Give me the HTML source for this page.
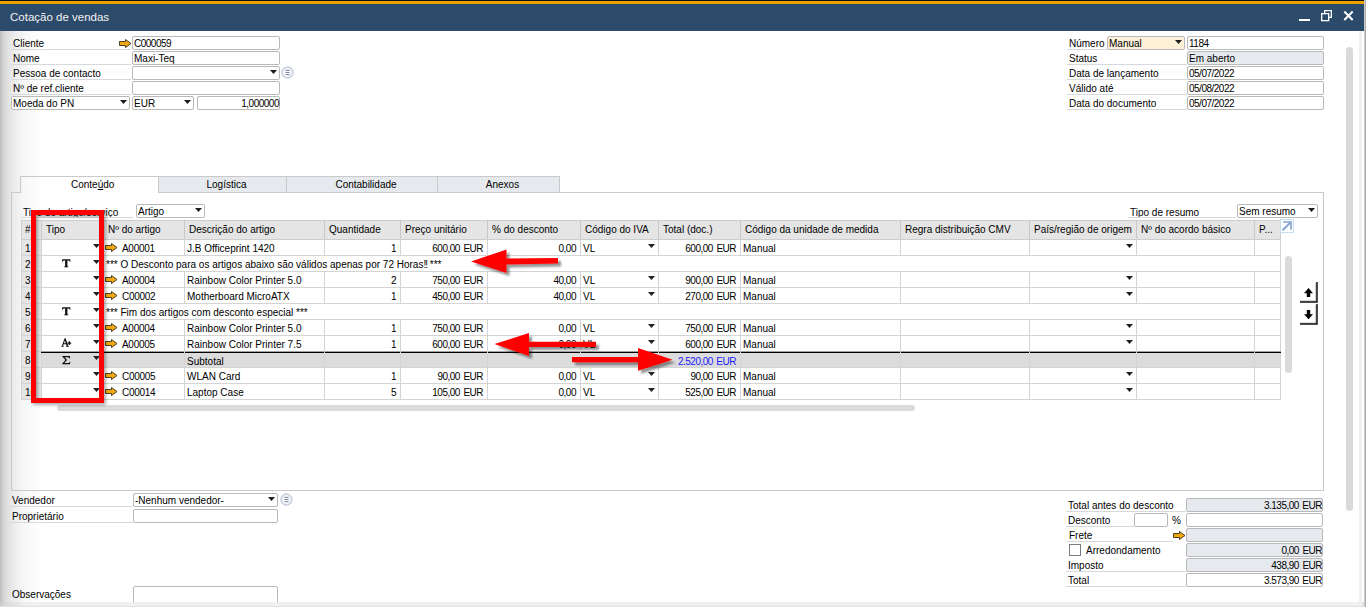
<!DOCTYPE html><html><head><meta charset="utf-8"><style>
html,body{margin:0;padding:0;width:1366px;height:607px;overflow:hidden;background:#fff;font-family:"Liberation Sans", sans-serif;}
.t{position:absolute;font-size:10px;line-height:12px;white-space:nowrap;color:#000;}

</style></head><body>
<div style="position:absolute;left:0px;top:0px;width:1366px;height:607px;background:#fff;"></div>
<div style="position:absolute;left:0px;top:31px;width:44px;height:576px;background:linear-gradient(to right,#c2c2c2 0px,#c2c2c2 2px,#cdcdcd 2px,#d4d4d4 4px,#e2e2e2 8px,#efefef 16px,#f8f8f8 26px,#fff 44px);"></div>
<div style="position:absolute;left:0px;top:602px;width:1366px;height:5px;background:#e2e2e2;"></div>
<div style="position:absolute;left:1359px;top:31px;width:3px;height:571px;background:#f0f0f0;"></div>
<div style="position:absolute;left:0px;top:0px;width:1366px;height:1px;background:#111;"></div>
<div style="position:absolute;left:0px;top:1px;width:1366px;height:3px;background:#e8a200;"></div>
<div style="position:absolute;left:0px;top:4px;width:1364px;height:27px;background:#2c4a6a;"></div>
<div class="t" style="left:10px;top:10px;font-size:11.5px;line-height:14px;color:#f2f2f2;">Cotação de vendas</div>
<div style="position:absolute;left:1299px;top:19px;width:11px;height:2px;background:#fff;"></div>
<svg width="14" height="14" style="position:absolute;left:1320px;top:9px"><rect x="1.65" y="4.65" width="7" height="7" fill="none" stroke="#fff" stroke-width="1.3"/><path d="M4.65 4.2V1.65H11.35V8.35H9" fill="none" stroke="#fff" stroke-width="1.3"/></svg>
<svg width="12" height="12" style="position:absolute;left:1343px;top:10px"><path d="M1.3 1.5L9.7 10M9.7 1.5L1.3 10" stroke="#fff" stroke-width="2"/></svg>
<div style="position:absolute;left:1346px;top:47px;width:7px;height:464px;background:#dadada;border-radius:3.5px;"></div>
<div class="t" style="left:13px;top:38px;">Cliente</div>
<div style="position:absolute;left:11px;top:49px;width:120px;height:1px;background:#d6d9de;"></div>
<div class="t" style="left:13px;top:53px;">Nome</div>
<div style="position:absolute;left:11px;top:64px;width:120px;height:1px;background:#d6d9de;"></div>
<div class="t" style="left:13px;top:68px;">Pessoa de contacto</div>
<div style="position:absolute;left:11px;top:79px;width:120px;height:1px;background:#d6d9de;"></div>
<div class="t" style="left:13px;top:83px;">Nº de ref.cliente</div>
<div style="position:absolute;left:11px;top:94px;width:120px;height:1px;background:#d6d9de;"></div>
<svg width="13" height="9" viewBox="0 0 13 9" style="position:absolute;left:119px;top:39px"><path d="M0.5 2.5 H6.5 V0.5 L12 4.5 L6.5 8.5 V6.5 H0.5 Z" fill="#f0a80e" stroke="#3a3020" stroke-width="0.9" stroke-linejoin="miter"/></svg>
<div style="position:absolute;left:132px;top:36px;width:148px;height:14px;box-sizing:border-box;border:1px solid #b9b9b9;border-radius:2px;background:#fff;"></div>
<div class="t" style="left:134px;top:38px;letter-spacing:-0.5px;word-spacing:1.2px;">C000059</div>
<div style="position:absolute;left:132px;top:51px;width:148px;height:14px;box-sizing:border-box;border:1px solid #b9b9b9;border-radius:2px;background:#fff;"></div>
<div class="t" style="left:134px;top:53px;">Maxi-Teq</div>
<div style="position:absolute;left:132px;top:66px;width:148px;height:14px;box-sizing:border-box;border:1px solid #b9b9b9;border-radius:2px;background:#fff;"></div>
<svg width="7" height="4" style="position:absolute;left:270px;top:70px"><path d="M0 0 H7 L3.5 4 Z" fill="#1e1e1e"/></svg>
<svg width="14" height="14" style="position:absolute;left:281px;top:66px"><defs><radialGradient id="rg28166"><stop offset="0.45" stop-color="#fbfcfe"/><stop offset="1" stop-color="#dfe5f3"/></radialGradient></defs><circle cx="6.5" cy="6.5" r="5.6" fill="url(#rg28166)" stroke="#aab4cc" stroke-width="0.9"/><path d="M4.6 4.4H8.6M4.6 6.5H8.6M4.6 8.6H8.6" stroke="#6f7890" stroke-width="0.9"/></svg>
<div style="position:absolute;left:132px;top:81px;width:148px;height:14px;box-sizing:border-box;border:1px solid #b9b9b9;border-radius:2px;background:#fff;"></div>
<div style="position:absolute;left:11px;top:96px;width:119px;height:14px;box-sizing:border-box;border:1px solid #b9b9b9;border-radius:2px;background:#fff;"></div>
<div class="t" style="left:13px;top:98px;">Moeda do PN</div>
<svg width="7" height="4" style="position:absolute;left:120px;top:100px"><path d="M0 0 H7 L3.5 4 Z" fill="#1e1e1e"/></svg>
<div style="position:absolute;left:132px;top:96px;width:62px;height:14px;box-sizing:border-box;border:1px solid #b9b9b9;border-radius:2px;background:#fff;"></div>
<div class="t" style="left:134px;top:98px;">EUR</div>
<svg width="7" height="4" style="position:absolute;left:184px;top:100px"><path d="M0 0 H7 L3.5 4 Z" fill="#1e1e1e"/></svg>
<div style="position:absolute;left:197px;top:96px;width:83px;height:14px;box-sizing:border-box;border:1px solid #b9b9b9;border-radius:2px;background:#fff;"></div>
<div class="t" style="right:1087px;top:98px;letter-spacing:-0.5px;word-spacing:1.2px;">1,000000</div>
<div class="t" style="left:1069px;top:38px;">Número</div>
<div style="position:absolute;left:1067px;top:49px;width:40px;height:1px;background:#d6d9de;"></div>
<div style="position:absolute;left:1107px;top:36px;width:78px;height:14px;box-sizing:border-box;border:1px solid #b9b9b9;border-radius:2px;background:#fdf1d8;"></div>
<div class="t" style="left:1109px;top:38px;">Manual</div>
<svg width="7" height="4" style="position:absolute;left:1175px;top:40px"><path d="M0 0 H7 L3.5 4 Z" fill="#1e1e1e"/></svg>
<div style="position:absolute;left:1187px;top:36px;width:137px;height:14px;box-sizing:border-box;border:1px solid #b9b9b9;border-radius:2px;background:#fff;"></div>
<div class="t" style="left:1189px;top:38px;letter-spacing:-0.5px;word-spacing:1.2px;">1184</div>
<div class="t" style="left:1069px;top:53px;">Status</div>
<div style="position:absolute;left:1067px;top:64px;width:120px;height:1px;background:#d6d9de;"></div>
<div style="position:absolute;left:1187px;top:51px;width:137px;height:14px;box-sizing:border-box;border:1px solid #b9b9b9;border-radius:2px;background:#e6eaee;"></div>
<div class="t" style="left:1189px;top:53px;">Em aberto</div>
<div class="t" style="left:1069px;top:68px;">Data de lançamento</div>
<div style="position:absolute;left:1067px;top:79px;width:120px;height:1px;background:#d6d9de;"></div>
<div style="position:absolute;left:1187px;top:66px;width:137px;height:14px;box-sizing:border-box;border:1px solid #b9b9b9;border-radius:2px;background:#fff;"></div>
<div class="t" style="left:1189px;top:68px;letter-spacing:-0.5px;word-spacing:1.2px;">05/07/2022</div>
<div class="t" style="left:1069px;top:83px;">Válido até</div>
<div style="position:absolute;left:1067px;top:94px;width:120px;height:1px;background:#d6d9de;"></div>
<div style="position:absolute;left:1187px;top:81px;width:137px;height:14px;box-sizing:border-box;border:1px solid #b9b9b9;border-radius:2px;background:#fff;"></div>
<div class="t" style="left:1189px;top:83px;letter-spacing:-0.5px;word-spacing:1.2px;">05/08/2022</div>
<div class="t" style="left:1069px;top:98px;">Data do documento</div>
<div style="position:absolute;left:1067px;top:109px;width:120px;height:1px;background:#d6d9de;"></div>
<div style="position:absolute;left:1187px;top:96px;width:137px;height:14px;box-sizing:border-box;border:1px solid #b9b9b9;border-radius:2px;background:#fff;"></div>
<div class="t" style="left:1189px;top:98px;letter-spacing:-0.5px;word-spacing:1.2px;">05/07/2022</div>
<div style="position:absolute;left:11px;top:192px;width:1313px;height:299px;box-sizing:border-box;border:1px solid #c9c9c9;border-top:none;"></div>
<div style="position:absolute;left:11px;top:192px;width:10px;height:1px;background:#c9c9c9;"></div>
<div style="position:absolute;left:158px;top:192px;width:1166px;height:1px;background:#c9c9c9;"></div>
<div style="position:absolute;left:20px;top:176px;width:139px;height:17px;box-sizing:border-box;border:1px solid #c9c9c9;border-bottom:none;"></div>
<div class="t" style="left:71px;top:179px;">Conte<u>ú</u>do</div>
<div style="position:absolute;left:158px;top:176px;width:129px;height:17px;box-sizing:border-box;border:1px solid #c9c9c9;background:#e6eaee;"></div>
<div class="t" style="left:162px;width:129px;top:179px;text-align:center">Logística</div>
<div style="position:absolute;left:286px;top:176px;width:152px;height:17px;box-sizing:border-box;border:1px solid #c9c9c9;background:#e6eaee;"></div>
<div class="t" style="left:290px;width:152px;top:179px;text-align:center">Contabilidade</div>
<div style="position:absolute;left:437px;top:176px;width:123px;height:17px;box-sizing:border-box;border:1px solid #c9c9c9;background:#e6eaee;"></div>
<div class="t" style="left:441px;width:123px;top:179px;text-align:center">Anexos</div>
<div class="t" style="left:23px;top:207px;">Tipo de artigo/serviço</div>
<div style="position:absolute;left:21px;top:217px;width:112px;height:1px;background:#d6d9de;"></div>
<div style="position:absolute;left:136px;top:204px;width:69px;height:14px;box-sizing:border-box;border:1px solid #b9b9b9;border-radius:2px;background:#fff;"></div>
<div class="t" style="left:138px;top:206px;">Artigo</div>
<svg width="7" height="4" style="position:absolute;left:195px;top:208px"><path d="M0 0 H7 L3.5 4 Z" fill="#1e1e1e"/></svg>
<div class="t" style="left:1130px;top:207px;">Tipo de resumo</div>
<div style="position:absolute;left:1128px;top:217px;width:108px;height:1px;background:#d6d9de;"></div>
<div style="position:absolute;left:1237px;top:204px;width:81px;height:14px;box-sizing:border-box;border:1px solid #b9b9b9;border-radius:2px;background:#fff;"></div>
<div class="t" style="left:1239px;top:206px;">Sem resumo</div>
<svg width="7" height="4" style="position:absolute;left:1308px;top:208px"><path d="M0 0 H7 L3.5 4 Z" fill="#1e1e1e"/></svg>
<div style="position:absolute;left:21px;top:220px;width:1260px;height:20px;background:#e5e5e5;box-sizing:border-box;border:1px solid #cdcdcd;"></div>
<div class="t" style="left:25px;top:224px;">#</div>
<div class="t" style="left:46px;top:224px;">Tipo</div>
<div style="position:absolute;left:41px;top:220px;width:1px;height:19px;background:#c8c8c8;"></div>
<div class="t" style="left:108px;top:224px;">Nº do artigo</div>
<div style="position:absolute;left:103px;top:220px;width:1px;height:19px;background:#c8c8c8;"></div>
<div class="t" style="left:189px;top:224px;">Descrição do artigo</div>
<div style="position:absolute;left:184px;top:220px;width:1px;height:19px;background:#c8c8c8;"></div>
<div class="t" style="left:329px;top:224px;">Quantidade</div>
<div style="position:absolute;left:324px;top:220px;width:1px;height:19px;background:#c8c8c8;"></div>
<div class="t" style="left:405px;top:224px;">Preço unitário</div>
<div style="position:absolute;left:400px;top:220px;width:1px;height:19px;background:#c8c8c8;"></div>
<div class="t" style="left:492px;top:224px;">% do desconto</div>
<div style="position:absolute;left:487px;top:220px;width:1px;height:19px;background:#c8c8c8;"></div>
<div class="t" style="left:585px;top:224px;">Código do IVA</div>
<div style="position:absolute;left:580px;top:220px;width:1px;height:19px;background:#c8c8c8;"></div>
<div class="t" style="left:663px;top:224px;">Total (doc.)</div>
<div style="position:absolute;left:658px;top:220px;width:1px;height:19px;background:#c8c8c8;"></div>
<div class="t" style="left:745px;top:224px;">Código da unidade de medida</div>
<div style="position:absolute;left:740px;top:220px;width:1px;height:19px;background:#c8c8c8;"></div>
<div class="t" style="left:905px;top:224px;">Regra distribuição CMV</div>
<div style="position:absolute;left:900px;top:220px;width:1px;height:19px;background:#c8c8c8;"></div>
<div class="t" style="left:1034px;top:224px;">País/região de origem</div>
<div style="position:absolute;left:1029px;top:220px;width:1px;height:19px;background:#c8c8c8;"></div>
<div class="t" style="left:1141px;top:224px;">Nº do acordo básico</div>
<div style="position:absolute;left:1136px;top:220px;width:1px;height:19px;background:#c8c8c8;"></div>
<div class="t" style="left:1259px;top:224px;">P...</div>
<div style="position:absolute;left:1254px;top:220px;width:1px;height:19px;background:#c8c8c8;"></div>
<div style="position:absolute;left:21px;top:240px;width:1260px;height:15px;background:#fff;"></div>
<div style="position:absolute;left:21px;top:256px;width:1260px;height:15px;background:#fff;"></div>
<div style="position:absolute;left:21px;top:272px;width:1260px;height:15px;background:#fff;"></div>
<div style="position:absolute;left:21px;top:288px;width:1260px;height:15px;background:#fff;"></div>
<div style="position:absolute;left:21px;top:304px;width:1260px;height:15px;background:#fff;"></div>
<div style="position:absolute;left:21px;top:320px;width:1260px;height:15px;background:#fff;"></div>
<div style="position:absolute;left:21px;top:336px;width:1260px;height:15px;background:#fff;"></div>
<div style="position:absolute;left:21px;top:352px;width:1260px;height:15px;background:#dcdcdc;"></div>
<div style="position:absolute;left:21px;top:368px;width:1260px;height:15px;background:#fff;"></div>
<div style="position:absolute;left:21px;top:384px;width:1260px;height:15px;background:#fff;"></div>
<div style="position:absolute;left:21px;top:240px;width:20px;height:15px;background:#e5e5e5;"></div>
<div class="t" style="left:25px;top:243px;">1</div>
<div style="position:absolute;left:21px;top:255px;width:1260px;height:1px;background:#d4d4d4;"></div>
<div style="position:absolute;left:21px;top:239px;width:1px;height:17px;background:#d4d4d4;"></div>
<div style="position:absolute;left:1280px;top:239px;width:1px;height:17px;background:#d4d4d4;"></div>
<div style="position:absolute;left:41px;top:239px;width:1px;height:17px;background:#d4d4d4;"></div>
<svg width="7" height="4" style="position:absolute;left:93px;top:244px"><path d="M0 0 H7 L3.5 4 Z" fill="#222"/></svg>
<div style="position:absolute;left:103px;top:239px;width:1px;height:17px;background:#d4d4d4;"></div>
<div style="position:absolute;left:184px;top:239px;width:1px;height:17px;background:#d4d4d4;"></div>
<div style="position:absolute;left:324px;top:239px;width:1px;height:17px;background:#d4d4d4;"></div>
<div style="position:absolute;left:400px;top:239px;width:1px;height:17px;background:#d4d4d4;"></div>
<div style="position:absolute;left:487px;top:239px;width:1px;height:17px;background:#d4d4d4;"></div>
<div style="position:absolute;left:580px;top:239px;width:1px;height:17px;background:#d4d4d4;"></div>
<div style="position:absolute;left:658px;top:239px;width:1px;height:17px;background:#d4d4d4;"></div>
<div style="position:absolute;left:740px;top:239px;width:1px;height:17px;background:#d4d4d4;"></div>
<div style="position:absolute;left:900px;top:239px;width:1px;height:17px;background:#d4d4d4;"></div>
<div style="position:absolute;left:1029px;top:239px;width:1px;height:17px;background:#d4d4d4;"></div>
<div style="position:absolute;left:1136px;top:239px;width:1px;height:17px;background:#d4d4d4;"></div>
<div style="position:absolute;left:1254px;top:239px;width:1px;height:17px;background:#d4d4d4;"></div>
<svg width="13" height="9" viewBox="0 0 13 9" style="position:absolute;left:105px;top:243px"><path d="M0.5 2.5 H6.5 V0.5 L12 4.5 L6.5 8.5 V6.5 H0.5 Z" fill="#f0a80e" stroke="#3a3020" stroke-width="0.9" stroke-linejoin="miter"/></svg>
<div class="t" style="left:122px;top:243px;letter-spacing:-0.3px;">A00001</div>
<div class="t" style="left:187px;top:243px;">J.B Officeprint 1420</div>
<div class="t" style="right:970px;top:243px;letter-spacing:-0.5px;word-spacing:1.2px;">1</div>
<div class="t" style="right:883px;top:243px;letter-spacing:-0.5px;word-spacing:1.2px;">600,00 EUR</div>
<div class="t" style="right:790px;top:243px;letter-spacing:-0.5px;word-spacing:1.2px;">0,00</div>
<div class="t" style="left:583px;top:243px;">VL</div>
<svg width="7" height="4" style="position:absolute;left:648px;top:244px"><path d="M0 0 H7 L3.5 4 Z" fill="#222"/></svg>
<div class="t" style="right:630px;top:243px;letter-spacing:-0.5px;word-spacing:1.2px;">600,00 EUR</div>
<div class="t" style="left:743px;top:243px;">Manual</div>
<svg width="7" height="4" style="position:absolute;left:1126px;top:244px"><path d="M0 0 H7 L3.5 4 Z" fill="#222"/></svg>
<div style="position:absolute;left:21px;top:256px;width:20px;height:15px;background:#e5e5e5;"></div>
<div class="t" style="left:25px;top:259px;">2</div>
<div style="position:absolute;left:21px;top:271px;width:1260px;height:1px;background:#d4d4d4;"></div>
<div style="position:absolute;left:21px;top:255px;width:1px;height:17px;background:#d4d4d4;"></div>
<div style="position:absolute;left:1280px;top:255px;width:1px;height:17px;background:#d4d4d4;"></div>
<div style="position:absolute;left:41px;top:255px;width:1px;height:17px;background:#d4d4d4;"></div>
<svg width="7" height="4" style="position:absolute;left:93px;top:260px"><path d="M0 0 H7 L3.5 4 Z" fill="#222"/></svg>
<svg width="9" height="9" style="position:absolute;left:62px;top:259px"><path d="M0.2 0.2 H8.3 L8.4 2.8 H7.8 Q7.5 1.4 6.3 1.4 H5.4 V7 Q5.5 7.5 6.3 7.6 V8.3 H2.2 V7.6 Q3 7.5 3.1 7 V1.4 H2.2 Q1 1.4 0.7 2.8 H0.1 Z" fill="#111"/></svg>
<div style="position:absolute;left:103px;top:255px;width:1px;height:17px;background:#d4d4d4;"></div>
<div class="t" style="left:106px;top:259px;">*** O Desconto para os artigos abaixo são válidos apenas por 72 Horas<span style="letter-spacing:-1px">!!</span>  ***</div>
<div style="position:absolute;left:21px;top:272px;width:20px;height:15px;background:#e5e5e5;"></div>
<div class="t" style="left:25px;top:275px;">3</div>
<div style="position:absolute;left:21px;top:287px;width:1260px;height:1px;background:#d4d4d4;"></div>
<div style="position:absolute;left:21px;top:271px;width:1px;height:17px;background:#d4d4d4;"></div>
<div style="position:absolute;left:1280px;top:271px;width:1px;height:17px;background:#d4d4d4;"></div>
<div style="position:absolute;left:41px;top:271px;width:1px;height:17px;background:#d4d4d4;"></div>
<svg width="7" height="4" style="position:absolute;left:93px;top:276px"><path d="M0 0 H7 L3.5 4 Z" fill="#222"/></svg>
<div style="position:absolute;left:103px;top:271px;width:1px;height:17px;background:#d4d4d4;"></div>
<div style="position:absolute;left:184px;top:271px;width:1px;height:17px;background:#d4d4d4;"></div>
<div style="position:absolute;left:324px;top:271px;width:1px;height:17px;background:#d4d4d4;"></div>
<div style="position:absolute;left:400px;top:271px;width:1px;height:17px;background:#d4d4d4;"></div>
<div style="position:absolute;left:487px;top:271px;width:1px;height:17px;background:#d4d4d4;"></div>
<div style="position:absolute;left:580px;top:271px;width:1px;height:17px;background:#d4d4d4;"></div>
<div style="position:absolute;left:658px;top:271px;width:1px;height:17px;background:#d4d4d4;"></div>
<div style="position:absolute;left:740px;top:271px;width:1px;height:17px;background:#d4d4d4;"></div>
<div style="position:absolute;left:900px;top:271px;width:1px;height:17px;background:#d4d4d4;"></div>
<div style="position:absolute;left:1029px;top:271px;width:1px;height:17px;background:#d4d4d4;"></div>
<div style="position:absolute;left:1136px;top:271px;width:1px;height:17px;background:#d4d4d4;"></div>
<div style="position:absolute;left:1254px;top:271px;width:1px;height:17px;background:#d4d4d4;"></div>
<svg width="13" height="9" viewBox="0 0 13 9" style="position:absolute;left:105px;top:275px"><path d="M0.5 2.5 H6.5 V0.5 L12 4.5 L6.5 8.5 V6.5 H0.5 Z" fill="#f0a80e" stroke="#3a3020" stroke-width="0.9" stroke-linejoin="miter"/></svg>
<div class="t" style="left:122px;top:275px;letter-spacing:-0.3px;">A00004</div>
<div class="t" style="left:187px;top:275px;">Rainbow Color Printer 5.0</div>
<div class="t" style="right:970px;top:275px;letter-spacing:-0.5px;word-spacing:1.2px;">2</div>
<div class="t" style="right:883px;top:275px;letter-spacing:-0.5px;word-spacing:1.2px;">750,00 EUR</div>
<div class="t" style="right:790px;top:275px;letter-spacing:-0.5px;word-spacing:1.2px;">40,00</div>
<div class="t" style="left:583px;top:275px;">VL</div>
<svg width="7" height="4" style="position:absolute;left:648px;top:276px"><path d="M0 0 H7 L3.5 4 Z" fill="#222"/></svg>
<div class="t" style="right:630px;top:275px;letter-spacing:-0.5px;word-spacing:1.2px;">900,00 EUR</div>
<div class="t" style="left:743px;top:275px;">Manual</div>
<svg width="7" height="4" style="position:absolute;left:1126px;top:276px"><path d="M0 0 H7 L3.5 4 Z" fill="#222"/></svg>
<div style="position:absolute;left:21px;top:288px;width:20px;height:15px;background:#e5e5e5;"></div>
<div class="t" style="left:25px;top:291px;">4</div>
<div style="position:absolute;left:21px;top:303px;width:1260px;height:1px;background:#d4d4d4;"></div>
<div style="position:absolute;left:21px;top:287px;width:1px;height:17px;background:#d4d4d4;"></div>
<div style="position:absolute;left:1280px;top:287px;width:1px;height:17px;background:#d4d4d4;"></div>
<div style="position:absolute;left:41px;top:287px;width:1px;height:17px;background:#d4d4d4;"></div>
<svg width="7" height="4" style="position:absolute;left:93px;top:292px"><path d="M0 0 H7 L3.5 4 Z" fill="#222"/></svg>
<div style="position:absolute;left:103px;top:287px;width:1px;height:17px;background:#d4d4d4;"></div>
<div style="position:absolute;left:184px;top:287px;width:1px;height:17px;background:#d4d4d4;"></div>
<div style="position:absolute;left:324px;top:287px;width:1px;height:17px;background:#d4d4d4;"></div>
<div style="position:absolute;left:400px;top:287px;width:1px;height:17px;background:#d4d4d4;"></div>
<div style="position:absolute;left:487px;top:287px;width:1px;height:17px;background:#d4d4d4;"></div>
<div style="position:absolute;left:580px;top:287px;width:1px;height:17px;background:#d4d4d4;"></div>
<div style="position:absolute;left:658px;top:287px;width:1px;height:17px;background:#d4d4d4;"></div>
<div style="position:absolute;left:740px;top:287px;width:1px;height:17px;background:#d4d4d4;"></div>
<div style="position:absolute;left:900px;top:287px;width:1px;height:17px;background:#d4d4d4;"></div>
<div style="position:absolute;left:1029px;top:287px;width:1px;height:17px;background:#d4d4d4;"></div>
<div style="position:absolute;left:1136px;top:287px;width:1px;height:17px;background:#d4d4d4;"></div>
<div style="position:absolute;left:1254px;top:287px;width:1px;height:17px;background:#d4d4d4;"></div>
<svg width="13" height="9" viewBox="0 0 13 9" style="position:absolute;left:105px;top:291px"><path d="M0.5 2.5 H6.5 V0.5 L12 4.5 L6.5 8.5 V6.5 H0.5 Z" fill="#f0a80e" stroke="#3a3020" stroke-width="0.9" stroke-linejoin="miter"/></svg>
<div class="t" style="left:122px;top:291px;letter-spacing:-0.3px;">C00002</div>
<div class="t" style="left:187px;top:291px;">Motherboard MicroATX</div>
<div class="t" style="right:970px;top:291px;letter-spacing:-0.5px;word-spacing:1.2px;">1</div>
<div class="t" style="right:883px;top:291px;letter-spacing:-0.5px;word-spacing:1.2px;">450,00 EUR</div>
<div class="t" style="right:790px;top:291px;letter-spacing:-0.5px;word-spacing:1.2px;">40,00</div>
<div class="t" style="left:583px;top:291px;">VL</div>
<svg width="7" height="4" style="position:absolute;left:648px;top:292px"><path d="M0 0 H7 L3.5 4 Z" fill="#222"/></svg>
<div class="t" style="right:630px;top:291px;letter-spacing:-0.5px;word-spacing:1.2px;">270,00 EUR</div>
<div class="t" style="left:743px;top:291px;">Manual</div>
<svg width="7" height="4" style="position:absolute;left:1126px;top:292px"><path d="M0 0 H7 L3.5 4 Z" fill="#222"/></svg>
<div style="position:absolute;left:21px;top:304px;width:20px;height:15px;background:#e5e5e5;"></div>
<div class="t" style="left:25px;top:307px;">5</div>
<div style="position:absolute;left:21px;top:319px;width:1260px;height:1px;background:#d4d4d4;"></div>
<div style="position:absolute;left:21px;top:303px;width:1px;height:17px;background:#d4d4d4;"></div>
<div style="position:absolute;left:1280px;top:303px;width:1px;height:17px;background:#d4d4d4;"></div>
<div style="position:absolute;left:41px;top:303px;width:1px;height:17px;background:#d4d4d4;"></div>
<svg width="7" height="4" style="position:absolute;left:93px;top:308px"><path d="M0 0 H7 L3.5 4 Z" fill="#222"/></svg>
<svg width="9" height="9" style="position:absolute;left:62px;top:307px"><path d="M0.2 0.2 H8.3 L8.4 2.8 H7.8 Q7.5 1.4 6.3 1.4 H5.4 V7 Q5.5 7.5 6.3 7.6 V8.3 H2.2 V7.6 Q3 7.5 3.1 7 V1.4 H2.2 Q1 1.4 0.7 2.8 H0.1 Z" fill="#111"/></svg>
<div style="position:absolute;left:103px;top:303px;width:1px;height:17px;background:#d4d4d4;"></div>
<div class="t" style="left:106px;top:307px;">*** Fim dos artigos com desconto especial ***</div>
<div style="position:absolute;left:21px;top:320px;width:20px;height:15px;background:#e5e5e5;"></div>
<div class="t" style="left:25px;top:323px;">6</div>
<div style="position:absolute;left:21px;top:335px;width:1260px;height:1px;background:#d4d4d4;"></div>
<div style="position:absolute;left:21px;top:319px;width:1px;height:17px;background:#d4d4d4;"></div>
<div style="position:absolute;left:1280px;top:319px;width:1px;height:17px;background:#d4d4d4;"></div>
<div style="position:absolute;left:41px;top:319px;width:1px;height:17px;background:#d4d4d4;"></div>
<svg width="7" height="4" style="position:absolute;left:93px;top:324px"><path d="M0 0 H7 L3.5 4 Z" fill="#222"/></svg>
<div style="position:absolute;left:103px;top:319px;width:1px;height:17px;background:#d4d4d4;"></div>
<div style="position:absolute;left:184px;top:319px;width:1px;height:17px;background:#d4d4d4;"></div>
<div style="position:absolute;left:324px;top:319px;width:1px;height:17px;background:#d4d4d4;"></div>
<div style="position:absolute;left:400px;top:319px;width:1px;height:17px;background:#d4d4d4;"></div>
<div style="position:absolute;left:487px;top:319px;width:1px;height:17px;background:#d4d4d4;"></div>
<div style="position:absolute;left:580px;top:319px;width:1px;height:17px;background:#d4d4d4;"></div>
<div style="position:absolute;left:658px;top:319px;width:1px;height:17px;background:#d4d4d4;"></div>
<div style="position:absolute;left:740px;top:319px;width:1px;height:17px;background:#d4d4d4;"></div>
<div style="position:absolute;left:900px;top:319px;width:1px;height:17px;background:#d4d4d4;"></div>
<div style="position:absolute;left:1029px;top:319px;width:1px;height:17px;background:#d4d4d4;"></div>
<div style="position:absolute;left:1136px;top:319px;width:1px;height:17px;background:#d4d4d4;"></div>
<div style="position:absolute;left:1254px;top:319px;width:1px;height:17px;background:#d4d4d4;"></div>
<svg width="13" height="9" viewBox="0 0 13 9" style="position:absolute;left:105px;top:323px"><path d="M0.5 2.5 H6.5 V0.5 L12 4.5 L6.5 8.5 V6.5 H0.5 Z" fill="#f0a80e" stroke="#3a3020" stroke-width="0.9" stroke-linejoin="miter"/></svg>
<div class="t" style="left:122px;top:323px;letter-spacing:-0.3px;">A00004</div>
<div class="t" style="left:187px;top:323px;">Rainbow Color Printer 5.0</div>
<div class="t" style="right:970px;top:323px;letter-spacing:-0.5px;word-spacing:1.2px;">1</div>
<div class="t" style="right:883px;top:323px;letter-spacing:-0.5px;word-spacing:1.2px;">750,00 EUR</div>
<div class="t" style="right:790px;top:323px;letter-spacing:-0.5px;word-spacing:1.2px;">0,00</div>
<div class="t" style="left:583px;top:323px;">VL</div>
<svg width="7" height="4" style="position:absolute;left:648px;top:324px"><path d="M0 0 H7 L3.5 4 Z" fill="#222"/></svg>
<div class="t" style="right:630px;top:323px;letter-spacing:-0.5px;word-spacing:1.2px;">750,00 EUR</div>
<div class="t" style="left:743px;top:323px;">Manual</div>
<svg width="7" height="4" style="position:absolute;left:1126px;top:324px"><path d="M0 0 H7 L3.5 4 Z" fill="#222"/></svg>
<div style="position:absolute;left:21px;top:336px;width:20px;height:15px;background:#e5e5e5;"></div>
<div class="t" style="left:25px;top:339px;">7</div>
<div style="position:absolute;left:21px;top:351px;width:1260px;height:1px;background:#d4d4d4;"></div>
<div style="position:absolute;left:21px;top:335px;width:1px;height:17px;background:#d4d4d4;"></div>
<div style="position:absolute;left:1280px;top:335px;width:1px;height:17px;background:#d4d4d4;"></div>
<div style="position:absolute;left:41px;top:335px;width:1px;height:17px;background:#d4d4d4;"></div>
<svg width="7" height="4" style="position:absolute;left:93px;top:340px"><path d="M0 0 H7 L3.5 4 Z" fill="#222"/></svg>
<svg width="12" height="10" style="position:absolute;left:61px;top:338px"><path d="M3.6 0.3 H4.6 L7.3 8.0 L8.0 8.2 V8.8 H5.0 V8.2 L5.6 8.0 L5.1 6.3 H2.6 L2.1 8.0 L2.8 8.2 V8.8 H0.2 V8.2 L0.9 8.0 Z M2.95 5.2 H4.75 L3.85 2.4 Z" fill="#111" fill-rule="evenodd"/><path d="M6.4 5.2 H10.2 M8.3 3.3 V7.1" stroke="#111" stroke-width="1.3"/></svg>
<div style="position:absolute;left:103px;top:335px;width:1px;height:17px;background:#d4d4d4;"></div>
<div style="position:absolute;left:184px;top:335px;width:1px;height:17px;background:#d4d4d4;"></div>
<div style="position:absolute;left:324px;top:335px;width:1px;height:17px;background:#d4d4d4;"></div>
<div style="position:absolute;left:400px;top:335px;width:1px;height:17px;background:#d4d4d4;"></div>
<div style="position:absolute;left:487px;top:335px;width:1px;height:17px;background:#d4d4d4;"></div>
<div style="position:absolute;left:580px;top:335px;width:1px;height:17px;background:#d4d4d4;"></div>
<div style="position:absolute;left:658px;top:335px;width:1px;height:17px;background:#d4d4d4;"></div>
<div style="position:absolute;left:740px;top:335px;width:1px;height:17px;background:#d4d4d4;"></div>
<div style="position:absolute;left:900px;top:335px;width:1px;height:17px;background:#d4d4d4;"></div>
<div style="position:absolute;left:1029px;top:335px;width:1px;height:17px;background:#d4d4d4;"></div>
<div style="position:absolute;left:1136px;top:335px;width:1px;height:17px;background:#d4d4d4;"></div>
<div style="position:absolute;left:1254px;top:335px;width:1px;height:17px;background:#d4d4d4;"></div>
<svg width="13" height="9" viewBox="0 0 13 9" style="position:absolute;left:105px;top:339px"><path d="M0.5 2.5 H6.5 V0.5 L12 4.5 L6.5 8.5 V6.5 H0.5 Z" fill="#f0a80e" stroke="#3a3020" stroke-width="0.9" stroke-linejoin="miter"/></svg>
<div class="t" style="left:122px;top:339px;letter-spacing:-0.3px;">A00005</div>
<div class="t" style="left:187px;top:339px;">Rainbow Color Printer 7.5</div>
<div class="t" style="right:970px;top:339px;letter-spacing:-0.5px;word-spacing:1.2px;">1</div>
<div class="t" style="right:883px;top:339px;letter-spacing:-0.5px;word-spacing:1.2px;">600,00 EUR</div>
<div class="t" style="right:790px;top:339px;letter-spacing:-0.5px;word-spacing:1.2px;">0,00</div>
<div class="t" style="left:583px;top:339px;">VL</div>
<svg width="7" height="4" style="position:absolute;left:648px;top:340px"><path d="M0 0 H7 L3.5 4 Z" fill="#222"/></svg>
<div class="t" style="right:630px;top:339px;letter-spacing:-0.5px;word-spacing:1.2px;">600,00 EUR</div>
<div class="t" style="left:743px;top:339px;">Manual</div>
<svg width="7" height="4" style="position:absolute;left:1126px;top:340px"><path d="M0 0 H7 L3.5 4 Z" fill="#222"/></svg>
<div style="position:absolute;left:21px;top:352px;width:20px;height:15px;background:#e5e5e5;"></div>
<div class="t" style="left:25px;top:355px;">8</div>
<div style="position:absolute;left:21px;top:367px;width:1260px;height:1px;background:#d4d4d4;"></div>
<div style="position:absolute;left:21px;top:351px;width:1px;height:17px;background:#d4d4d4;"></div>
<div style="position:absolute;left:1280px;top:351px;width:1px;height:17px;background:#d4d4d4;"></div>
<div style="position:absolute;left:41px;top:351px;width:1px;height:17px;background:#d4d4d4;"></div>
<svg width="7" height="4" style="position:absolute;left:93px;top:356px"><path d="M0 0 H7 L3.5 4 Z" fill="#222"/></svg>
<svg width="10" height="10" style="position:absolute;left:62px;top:356px"><path d="M0.3 0.1 H7.9 L8.1 2.4 H7.5 Q7.2 1.3 5.9 1.3 H2.6 L5.1 4.0 L2.3 7.0 H6.3 Q7.4 7.0 7.8 5.7 H8.4 L7.9 8.2 H0.1 V7.7 L3.4 4.0 L0.3 0.6 Z" fill="#111"/></svg>
<div style="position:absolute;left:103px;top:351px;width:1px;height:17px;background:#d4d4d4;"></div>
<div style="position:absolute;left:184px;top:351px;width:1px;height:17px;background:#d4d4d4;"></div>
<div style="position:absolute;left:324px;top:351px;width:1px;height:17px;background:#d4d4d4;"></div>
<div style="position:absolute;left:400px;top:351px;width:1px;height:17px;background:#d4d4d4;"></div>
<div style="position:absolute;left:487px;top:351px;width:1px;height:17px;background:#d4d4d4;"></div>
<div style="position:absolute;left:580px;top:351px;width:1px;height:17px;background:#d4d4d4;"></div>
<div style="position:absolute;left:658px;top:351px;width:1px;height:17px;background:#d4d4d4;"></div>
<div style="position:absolute;left:740px;top:351px;width:1px;height:17px;background:#d4d4d4;"></div>
<div style="position:absolute;left:900px;top:351px;width:1px;height:17px;background:#d4d4d4;"></div>
<div style="position:absolute;left:1029px;top:351px;width:1px;height:17px;background:#d4d4d4;"></div>
<div style="position:absolute;left:1136px;top:351px;width:1px;height:17px;background:#d4d4d4;"></div>
<div style="position:absolute;left:1254px;top:351px;width:1px;height:17px;background:#d4d4d4;"></div>
<div class="t" style="left:187px;top:356px;">Subtotal</div>
<div class="t" style="right:630px;top:356px;color:#1a1aff;letter-spacing:-0.5px;word-spacing:1.2px;">2.520,00 EUR</div>
<div style="position:absolute;left:21px;top:368px;width:20px;height:15px;background:#e5e5e5;"></div>
<div class="t" style="left:25px;top:371px;">9</div>
<div style="position:absolute;left:21px;top:383px;width:1260px;height:1px;background:#d4d4d4;"></div>
<div style="position:absolute;left:21px;top:367px;width:1px;height:17px;background:#d4d4d4;"></div>
<div style="position:absolute;left:1280px;top:367px;width:1px;height:17px;background:#d4d4d4;"></div>
<div style="position:absolute;left:41px;top:367px;width:1px;height:17px;background:#d4d4d4;"></div>
<svg width="7" height="4" style="position:absolute;left:93px;top:372px"><path d="M0 0 H7 L3.5 4 Z" fill="#222"/></svg>
<div style="position:absolute;left:103px;top:367px;width:1px;height:17px;background:#d4d4d4;"></div>
<div style="position:absolute;left:184px;top:367px;width:1px;height:17px;background:#d4d4d4;"></div>
<div style="position:absolute;left:324px;top:367px;width:1px;height:17px;background:#d4d4d4;"></div>
<div style="position:absolute;left:400px;top:367px;width:1px;height:17px;background:#d4d4d4;"></div>
<div style="position:absolute;left:487px;top:367px;width:1px;height:17px;background:#d4d4d4;"></div>
<div style="position:absolute;left:580px;top:367px;width:1px;height:17px;background:#d4d4d4;"></div>
<div style="position:absolute;left:658px;top:367px;width:1px;height:17px;background:#d4d4d4;"></div>
<div style="position:absolute;left:740px;top:367px;width:1px;height:17px;background:#d4d4d4;"></div>
<div style="position:absolute;left:900px;top:367px;width:1px;height:17px;background:#d4d4d4;"></div>
<div style="position:absolute;left:1029px;top:367px;width:1px;height:17px;background:#d4d4d4;"></div>
<div style="position:absolute;left:1136px;top:367px;width:1px;height:17px;background:#d4d4d4;"></div>
<div style="position:absolute;left:1254px;top:367px;width:1px;height:17px;background:#d4d4d4;"></div>
<svg width="13" height="9" viewBox="0 0 13 9" style="position:absolute;left:105px;top:371px"><path d="M0.5 2.5 H6.5 V0.5 L12 4.5 L6.5 8.5 V6.5 H0.5 Z" fill="#f0a80e" stroke="#3a3020" stroke-width="0.9" stroke-linejoin="miter"/></svg>
<div class="t" style="left:122px;top:371px;letter-spacing:-0.3px;">C00005</div>
<div class="t" style="left:187px;top:371px;">WLAN Card</div>
<div class="t" style="right:970px;top:371px;letter-spacing:-0.5px;word-spacing:1.2px;">1</div>
<div class="t" style="right:883px;top:371px;letter-spacing:-0.5px;word-spacing:1.2px;">90,00 EUR</div>
<div class="t" style="right:790px;top:371px;letter-spacing:-0.5px;word-spacing:1.2px;">0,00</div>
<div class="t" style="left:583px;top:371px;">VL</div>
<svg width="7" height="4" style="position:absolute;left:648px;top:372px"><path d="M0 0 H7 L3.5 4 Z" fill="#222"/></svg>
<div class="t" style="right:630px;top:371px;letter-spacing:-0.5px;word-spacing:1.2px;">90,00 EUR</div>
<div class="t" style="left:743px;top:371px;">Manual</div>
<svg width="7" height="4" style="position:absolute;left:1126px;top:372px"><path d="M0 0 H7 L3.5 4 Z" fill="#222"/></svg>
<div style="position:absolute;left:21px;top:384px;width:20px;height:15px;background:#e5e5e5;"></div>
<div class="t" style="left:25px;top:387px;">10</div>
<div style="position:absolute;left:21px;top:399px;width:1260px;height:1px;background:#d4d4d4;"></div>
<div style="position:absolute;left:21px;top:383px;width:1px;height:17px;background:#d4d4d4;"></div>
<div style="position:absolute;left:1280px;top:383px;width:1px;height:17px;background:#d4d4d4;"></div>
<div style="position:absolute;left:41px;top:383px;width:1px;height:17px;background:#d4d4d4;"></div>
<svg width="7" height="4" style="position:absolute;left:93px;top:388px"><path d="M0 0 H7 L3.5 4 Z" fill="#222"/></svg>
<div style="position:absolute;left:103px;top:383px;width:1px;height:17px;background:#d4d4d4;"></div>
<div style="position:absolute;left:184px;top:383px;width:1px;height:17px;background:#d4d4d4;"></div>
<div style="position:absolute;left:324px;top:383px;width:1px;height:17px;background:#d4d4d4;"></div>
<div style="position:absolute;left:400px;top:383px;width:1px;height:17px;background:#d4d4d4;"></div>
<div style="position:absolute;left:487px;top:383px;width:1px;height:17px;background:#d4d4d4;"></div>
<div style="position:absolute;left:580px;top:383px;width:1px;height:17px;background:#d4d4d4;"></div>
<div style="position:absolute;left:658px;top:383px;width:1px;height:17px;background:#d4d4d4;"></div>
<div style="position:absolute;left:740px;top:383px;width:1px;height:17px;background:#d4d4d4;"></div>
<div style="position:absolute;left:900px;top:383px;width:1px;height:17px;background:#d4d4d4;"></div>
<div style="position:absolute;left:1029px;top:383px;width:1px;height:17px;background:#d4d4d4;"></div>
<div style="position:absolute;left:1136px;top:383px;width:1px;height:17px;background:#d4d4d4;"></div>
<div style="position:absolute;left:1254px;top:383px;width:1px;height:17px;background:#d4d4d4;"></div>
<svg width="13" height="9" viewBox="0 0 13 9" style="position:absolute;left:105px;top:387px"><path d="M0.5 2.5 H6.5 V0.5 L12 4.5 L6.5 8.5 V6.5 H0.5 Z" fill="#f0a80e" stroke="#3a3020" stroke-width="0.9" stroke-linejoin="miter"/></svg>
<div class="t" style="left:122px;top:387px;letter-spacing:-0.3px;">C00014</div>
<div class="t" style="left:187px;top:387px;">Laptop Case</div>
<div class="t" style="right:970px;top:387px;letter-spacing:-0.5px;word-spacing:1.2px;">5</div>
<div class="t" style="right:883px;top:387px;letter-spacing:-0.5px;word-spacing:1.2px;">105,00 EUR</div>
<div class="t" style="right:790px;top:387px;letter-spacing:-0.5px;word-spacing:1.2px;">0,00</div>
<div class="t" style="left:583px;top:387px;">VL</div>
<svg width="7" height="4" style="position:absolute;left:648px;top:388px"><path d="M0 0 H7 L3.5 4 Z" fill="#222"/></svg>
<div class="t" style="right:630px;top:387px;letter-spacing:-0.5px;word-spacing:1.2px;">525,00 EUR</div>
<div class="t" style="left:743px;top:387px;">Manual</div>
<svg width="7" height="4" style="position:absolute;left:1126px;top:388px"><path d="M0 0 H7 L3.5 4 Z" fill="#222"/></svg>
<div style="position:absolute;left:41px;top:351px;width:1240px;height:1px;background:#a0a0a0;"></div>
<div style="position:absolute;left:41px;top:352px;width:1240px;height:1px;background:#000;"></div>
<div style="position:absolute;left:184px;top:351px;width:1px;height:2px;background:#d4d4d4;"></div>
<div style="position:absolute;left:324px;top:351px;width:1px;height:2px;background:#d4d4d4;"></div>
<div style="position:absolute;left:400px;top:351px;width:1px;height:2px;background:#d4d4d4;"></div>
<div style="position:absolute;left:487px;top:351px;width:1px;height:2px;background:#d4d4d4;"></div>
<div style="position:absolute;left:580px;top:351px;width:1px;height:2px;background:#d4d4d4;"></div>
<div style="position:absolute;left:658px;top:351px;width:1px;height:2px;background:#d4d4d4;"></div>
<div style="position:absolute;left:740px;top:351px;width:1px;height:2px;background:#d4d4d4;"></div>
<div style="position:absolute;left:900px;top:351px;width:1px;height:2px;background:#d4d4d4;"></div>
<div style="position:absolute;left:1029px;top:351px;width:1px;height:2px;background:#d4d4d4;"></div>
<div style="position:absolute;left:1136px;top:351px;width:1px;height:2px;background:#d4d4d4;"></div>
<div style="position:absolute;left:1254px;top:351px;width:1px;height:2px;background:#d4d4d4;"></div>
<svg width="15" height="15" style="position:absolute;left:1280px;top:219px"><rect x="0.5" y="0.5" width="13" height="13" fill="#fff" stroke="#c8dbef"/><path d="M2.6 11.3L10.6 3.4" stroke="#7fa2cd" stroke-width="1.9"/><path d="M3.2 3H11V10.8" fill="none" stroke="#7fa2cd" stroke-width="1.6"/></svg>
<div style="position:absolute;left:1285px;top:256px;width:7px;height:117px;background:#dadada;border-radius:3.5px;"></div>
<div style="position:absolute;left:57px;top:405px;width:858px;height:6px;background:#dadada;border-radius:3px;"></div>
<svg width="19" height="22" style="position:absolute;left:1300px;top:282px"><path d="M15.9 1V19.1H0" fill="none" stroke="#9a9a9a" stroke-width="0.8"/><path d="M17 0V20H0" fill="none" stroke="#111" stroke-width="1.5"/><path d="M8.5 6 L13 11.2 H10.2 V15 H6.8 V11.2 H4 Z" fill="#000"/></svg>
<svg width="19" height="22" style="position:absolute;left:1300px;top:304px"><path d="M15.9 1V19.1H0" fill="none" stroke="#9a9a9a" stroke-width="0.8"/><path d="M17 0V20H0" fill="none" stroke="#111" stroke-width="1.5"/><path d="M6.8 6 H10.2 V10.3 H13 L8.5 15.2 L4 10.3 H6.8 Z" fill="#000"/></svg>
<div style="position:absolute;left:31px;top:210px;width:73px;height:193px;box-sizing:border-box;border:5px solid #ff0000;box-shadow:2px 2px 3px rgba(0,0,0,0.32), inset 2px 2px 3px rgba(0,0,0,0.3);"></div>
<svg width="1366" height="607" style="position:absolute;left:0;top:0"><defs><filter id="sh" x="-10%" y="-30%" width="130%" height="170%"><feGaussianBlur in="SourceAlpha" stdDeviation="1.3"/><feOffset dx="2.5" dy="2.5"/><feComponentTransfer><feFuncA type="linear" slope="0.42"/></feComponentTransfer><feMerge><feMergeNode/><feMergeNode in="SourceGraphic"/></feMerge></filter></defs>
<g filter="url(#sh)" fill="#ff0000">
<path d="M471 261.5 L506.5 249.5 L506.5 258.5 L558 258 L558 263.5 L506.5 264.5 L506.5 273 Z"/>
<path d="M494.5 344 L529 333 L529 341.8 L596 341.8 L596 347 L529 347 L529 356 Z"/>
<path d="M672.5 359.7 L638 348 L638 357 L572 357 L572 362.3 L638 362.3 L638 370.7 Z"/>
</g></svg>
<div class="t" style="left:12px;top:495px;">Vendedor</div>
<div style="position:absolute;left:10px;top:506px;width:123px;height:1px;background:#d6d9de;"></div>
<div style="position:absolute;left:133px;top:493px;width:145px;height:14px;box-sizing:border-box;border:1px solid #b9b9b9;border-radius:2px;background:#fff;"></div>
<div class="t" style="left:135px;top:495px;">-Nenhum vendedor-</div>
<svg width="7" height="4" style="position:absolute;left:268px;top:497px"><path d="M0 0 H7 L3.5 4 Z" fill="#1e1e1e"/></svg>
<svg width="14" height="14" style="position:absolute;left:280px;top:493px"><defs><radialGradient id="rg280493"><stop offset="0.45" stop-color="#fbfcfe"/><stop offset="1" stop-color="#dfe5f3"/></radialGradient></defs><circle cx="6.5" cy="6.5" r="5.6" fill="url(#rg280493)" stroke="#aab4cc" stroke-width="0.9"/><path d="M4.6 4.4H8.6M4.6 6.5H8.6M4.6 8.6H8.6" stroke="#6f7890" stroke-width="0.9"/></svg>
<div class="t" style="left:12px;top:511px;">Proprietário</div>
<div style="position:absolute;left:10px;top:522px;width:123px;height:1px;background:#d6d9de;"></div>
<div style="position:absolute;left:133px;top:509px;width:145px;height:14px;box-sizing:border-box;border:1px solid #b9b9b9;border-radius:2px;background:#fff;"></div>
<div class="t" style="left:12px;top:589px;">Observações</div>
<div style="position:absolute;left:133px;top:586px;width:145px;height:20px;box-sizing:border-box;border:1px solid #b9b9b9;border-radius:2px;background:#fff;"></div>
<div class="t" style="left:1068px;top:500px;">Total antes do desconto</div>
<div style="position:absolute;left:1066px;top:511px;width:120px;height:1px;background:#d6d9de;"></div>
<div style="position:absolute;left:1186px;top:498px;width:137px;height:14px;box-sizing:border-box;border:1px solid #b9b9b9;border-radius:2px;background:#e6eaee;"></div>
<div class="t" style="right:44px;top:500px;letter-spacing:-0.5px;word-spacing:1.2px;">3.135,00 EUR</div>
<div class="t" style="left:1068px;top:515px;">Desconto</div>
<div style="position:absolute;left:1066px;top:526px;width:68px;height:1px;background:#d6d9de;"></div>
<div style="position:absolute;left:1134px;top:513px;width:34px;height:14px;box-sizing:border-box;border:1px solid #b9b9b9;border-radius:2px;background:#fff;"></div>
<div class="t" style="left:1172px;top:515px;">%</div>
<div style="position:absolute;left:1186px;top:513px;width:137px;height:14px;box-sizing:border-box;border:1px solid #b9b9b9;border-radius:2px;background:#fff;"></div>
<div class="t" style="left:1069px;top:530px;">Frete</div>
<div style="position:absolute;left:1067px;top:541px;width:106px;height:1px;background:#d6d9de;"></div>
<svg width="13" height="9" viewBox="0 0 13 9" style="position:absolute;left:1173px;top:531px"><path d="M0.5 2.5 H6.5 V0.5 L12 4.5 L6.5 8.5 V6.5 H0.5 Z" fill="#f0a80e" stroke="#3a3020" stroke-width="0.9" stroke-linejoin="miter"/></svg>
<div style="position:absolute;left:1186px;top:528px;width:137px;height:14px;box-sizing:border-box;border:1px solid #b9b9b9;border-radius:2px;background:#e6eaee;"></div>
<div style="position:absolute;left:1069px;top:544px;width:12px;height:12px;box-sizing:border-box;border:1px solid #7d7d7d;background:#fff"></div>
<div class="t" style="left:1086px;top:545px;">Arredondamento</div>
<div style="position:absolute;left:1186px;top:543px;width:137px;height:14px;box-sizing:border-box;border:1px solid #b9b9b9;border-radius:2px;background:#e6eaee;"></div>
<div class="t" style="right:44px;top:545px;letter-spacing:-0.5px;word-spacing:1.2px;">0,00 EUR</div>
<div class="t" style="left:1068px;top:560px;">Imposto</div>
<div style="position:absolute;left:1066px;top:571px;width:120px;height:1px;background:#d6d9de;"></div>
<div style="position:absolute;left:1186px;top:558px;width:137px;height:14px;box-sizing:border-box;border:1px solid #b9b9b9;border-radius:2px;background:#e6eaee;"></div>
<div class="t" style="right:44px;top:560px;letter-spacing:-0.5px;word-spacing:1.2px;">438,90 EUR</div>
<div class="t" style="left:1068px;top:575px;">Total</div>
<div style="position:absolute;left:1066px;top:586px;width:120px;height:1px;background:#d6d9de;"></div>
<div style="position:absolute;left:1186px;top:573px;width:137px;height:14px;box-sizing:border-box;border:1px solid #b9b9b9;border-radius:2px;background:#fff;"></div>
<div class="t" style="right:44px;top:575px;letter-spacing:-0.5px;word-spacing:1.2px;">3.573,90 EUR</div>
<div style="position:absolute;left:0px;top:602px;width:1362px;height:4px;background:#f0f0f0;"></div>
<div style="position:absolute;left:0px;top:602px;width:26px;height:4px;background:linear-gradient(to right,#c8c8c8,#d8d8d8 5px,#f0f0f0 26px);"></div>
<div style="position:absolute;left:1364px;top:0px;width:2px;height:607px;background:linear-gradient(to right,#d8d8d8,#a0a0a0);"></div>
</body></html>
